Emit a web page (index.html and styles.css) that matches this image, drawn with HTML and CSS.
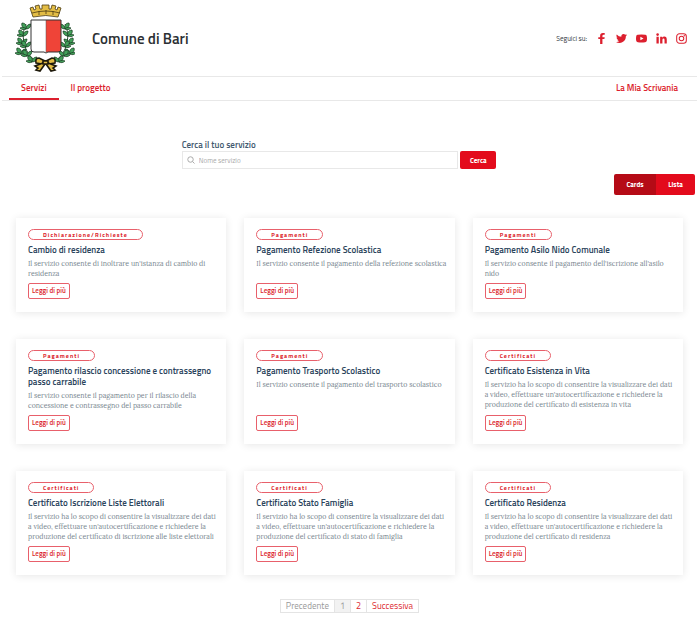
FILE: index.html
```html
<!DOCTYPE html>
<html lang="it">
  <head>
    <meta charset="UTF-8" />
    <meta name="viewport" content="width=device-width, initial-scale=1.0" />
    <title>Comune di Bari - Servizi</title>
    <link rel="stylesheet" href="styles.css">
  </head>
  <body>
    <!-- Header -->
    <header class="header">
      <a href="#" class="brand">
        <svg class="brand-logo" viewBox="0 0 60 68" aria-hidden="true">
          <defs>
            <g id="leaf">
              <path d="M0 0C-3-1-5-3-4-6C-1-6 1-4 0 0Z" />
              <path d="M0 0C0-3 2-5 5-5C5-2 3 0 0 0Z" />
              <path d="M0 0C-2 1-4 1-6-1C-4-2-2-2 0 0Z" />
            </g>
            <g id="branch">
              <path d="M11 20C6 30 7 48 22 58" fill="none" stroke="#234b2b" />
              <g fill="#43a05a" stroke="#173a20" stroke-width=".7">
                <use href="#leaf" x="11" y="25" />
                <use href="#leaf" x="8" y="32" />
                <use href="#leaf" x="7" y="40" />
                <use href="#leaf" x="11" y="43" />
                <use href="#leaf" x="6" y="50" />
                <use href="#leaf" x="12" y="52" />
                <use href="#leaf" x="17" y="58" />
              </g>
            </g>
          </defs>
          <use href="#branch" />
          <use href="#branch" transform="translate(61 0) scale(-1 1)" />
          <!-- crown -->
          <g fill="#e3bd45" stroke="#4b3b12" stroke-width=".8">
            <path d="M18 13L15 4L18 3L19 6L21 5L20 2L24 1L25 5H27L27 1H34L34 5H36L37 1L41 2L40 5L42 6L43 3L46 4L43 13Q31 10 18 13Z" />
            <path d="M17 9Q31 5 45 9" fill="none" />
            <path d="M24 7V11M31 6V10M38 7V11" fill="none" />
          </g>
          <!-- shield -->
          <path d="M16 16H31V48H19Q16 48 16 45Z" fill="#fff" />
          <path d="M31 16H46V45Q46 48 43 48H31Z" fill="#ef4438" />
          <path d="M31 16V48" stroke="#555" stroke-width=".5" />
          <path d="M16 16H46V45Q46 48 43 48H33L31 49L29 48H19Q16 48 16 45Z" fill="none" stroke="#333" />
          <!-- ribbon -->
          <g stroke="#1f1a0c" stroke-width="1.600" fill="#e3bd45">
            <path d="M30 57L24 54Q20 54 21 59L27 60Z" />
            <path d="M31 57L37 54Q41 54 40 59L34 60Z" />
            <path d="M28 59L20 62L23 64L21 66L25 67L30 60Z" />
            <path d="M33 59L41 62L38 64L40 66L36 67L31 60Z" />
            <path d="M28 57H33V60H28Z" />
          </g>
        </svg>
        <span class="brand-name">Comune di Bari</span>
      </a>
      <div class="social">
        <span class="social-label">Seguici su:</span>
        <a href="#" aria-label="Facebook">
          <svg viewBox="0 0 24 24"><path d="M9 24V13H5V9H9V6Q9 0 15 0H19V4H16.500Q14 4 14 6.500V9H19L18.300 13H14V24Z" /></svg>
        </a>
        <a href="#" aria-label="Twitter">
          <svg viewBox="0 0 24 24"><path d="M24 4.600a10 10 0 0 1-2.800.8 5 5 0 0 0 2.100-2.700 10 10 0 0 1-3.100 1.200 4.900 4.900 0 0 0-8.400 4.500A14 14 0 0 1 1.700 3.200a4.900 4.900 0 0 0 1.500 6.500 4.900 4.900 0 0 1-2.200-.6 4.900 4.900 0 0 0 3.900 4.900 5 5 0 0 1-2.200.1 4.900 4.900 0 0 0 4.600 3.400A9.900 9.900 0 0 1 0 19.500 14 14 0 0 0 21.500 7.100 10 10 0 0 0 24 4.600Z" /></svg>
        </a>
        <a href="#" aria-label="YouTube">
          <svg viewBox="0 0 24 24"><path fill-rule="evenodd" d="M4 4Q12 3 20 4Q23 4 23.500 7Q24.500 12 23.500 17Q23 20 20 20Q12 21 4 20Q1 20 .5 17Q-.5 12 .5 7Q1 4 4 4ZM9.500 8V16L16.500 12Z" /></svg>
        </a>
        <a href="#" aria-label="LinkedIn">
          <svg viewBox="0 0 24 24"><path d="M1 8H6V23H1ZM9 8H13.700V10.200Q15 7.600 18.300 7.600Q23.500 7.600 23.500 14V23H18.600V15Q18.600 11.800 16.400 11.800Q14 11.800 14 15V23H9Z" /><circle cx="3.500" cy="3.500" r="2.800" /></svg>
        </a>
        <a href="#" aria-label="Instagram">
          <svg viewBox="0 0 24 24"><g fill="none" stroke="currentColor" stroke-width="2.200"><rect x="1.500" y="1.500" width="21" height="21" rx="6" /><circle cx="12" cy="12" r="5" /></g><circle cx="18" cy="6" r="1.500" /></svg>
        </a>
      </div>
    </header>

    <!-- Navigation -->
    <nav class="navbar">
      <a href="#" class="nav-link active">Servizi</a>
      <a href="#" class="nav-link">Il progetto</a>
      <a href="#" class="nav-link nav-right">La Mia Scrivania</a>
    </nav>

    <main>
      <!-- Search -->
      <form class="search">
        <label for="service-name">Cerca il tuo servizio</label>
        <div class="search-row">
          <div class="search-box">
            <svg viewBox="0 0 16 16" aria-hidden="true"><circle cx="7" cy="7" r="5.500" /><path d="M11 11L15 15" /></svg>
            <input type="text" id="service-name" name="service" placeholder="Nome servizio" />
          </div>
          <button type="submit" class="search-button">Cerca</button>
        </div>
      </form>

      <div class="view-toggle">
        <button type="button" class="view-button selected">Cards</button>
        <button type="button" class="view-button">Lista</button>
      </div>

      <!-- Services -->
      <section class="cards">
        <article class="card">
          <span class="tag">Dichiarazione/Richieste</span>
          <h2>Cambio di residenza</h2>
          <p>Il servizio consente di inoltrare un'istanza di cambio di residenza</p>
          <a href="#" class="more">Leggi di più</a>
        </article>
        <article class="card">
          <span class="tag">Pagamenti</span>
          <h2>Pagamento Refezione Scolastica</h2>
          <p>Il servizio consente il pagamento della refezione scolastica</p>
          <a href="#" class="more">Leggi di più</a>
        </article>
        <article class="card">
          <span class="tag">Pagamenti</span>
          <h2>Pagamento Asilo Nido Comunale</h2>
          <p>Il servizio consente il pagamento dell'iscrizione all'asilo nido</p>
          <a href="#" class="more">Leggi di più</a>
        </article>
        <article class="card">
          <span class="tag">Pagamenti</span>
          <h2>Pagamento rilascio concessione e contrassegno passo carrabile</h2>
          <p>Il servizio consente il pagamento per il rilascio della concessione e contrassegno del passo carrabile</p>
          <a href="#" class="more">Leggi di più</a>
        </article>
        <article class="card">
          <span class="tag">Pagamenti</span>
          <h2>Pagamento Trasporto Scolastico</h2>
          <p>Il servizio consente il pagamento del trasporto scolastico</p>
          <a href="#" class="more">Leggi di più</a>
        </article>
        <article class="card">
          <span class="tag">Certificati</span>
          <h2>Certificato Esistenza in Vita</h2>
          <p>Il servizio ha lo scopo di consentire la visualizzare dei dati a video, effettuare un'autocertificazione e richiedere la produzione del certificato di esistenza in vita</p>
          <a href="#" class="more">Leggi di più</a>
        </article>
        <article class="card">
          <span class="tag">Certificati</span>
          <h2>Certificato Iscrizione Liste Elettorali</h2>
          <p>Il servizio ha lo scopo di consentire la visualizzare dei dati a video, effettuare un'autocertificazione e richiedere la produzione del certificato di iscrizione alle liste elettorali</p>
          <a href="#" class="more">Leggi di più</a>
        </article>
        <article class="card">
          <span class="tag">Certificati</span>
          <h2>Certificato Stato Famiglia</h2>
          <p>Il servizio ha lo scopo di consentire la visualizzare dei dati a video, effettuare un'autocertificazione e richiedere la produzione del certificato di stato di famiglia</p>
          <a href="#" class="more">Leggi di più</a>
        </article>
        <article class="card">
          <span class="tag">Certificati</span>
          <h2>Certificato Residenza</h2>
          <p>Il servizio ha lo scopo di consentire la visualizzare dei dati a video, effettuare un'autocertificazione e richiedere la produzione del certificato di residenza</p>
          <a href="#" class="more">Leggi di più</a>
        </article>
      </section>

      <!-- Pagination -->
      <nav class="pagination" aria-label="Pagine">
        <span class="page">Precedente</span>
        <span class="page current">1</span>
        <a href="#" class="page">2</a>
        <a href="#" class="page">Successiva</a>
      </nav>
    </main>
  </body>
</html>
```
FILE: styles.css
```css
/* Global Styles */
* {
  box-sizing: border-box;
}

body {
  margin: 0;
  background: white;
  color: #30373d;
  font-family: "Titillium Web", Roboto, sans-serif;
  font-size: 8px;
}

a {
  color: #dc1f2e;
  text-decoration: none;
}

button,
input {
  font-family: inherit;
}

/* Header */
.header {
  display: flex;
  justify-content: space-between;
  align-items: center;
  height: 76px;
  padding: 0 12px 0 15px;
}

.brand {
  display: flex;
  align-items: center;
  gap: 17px;
  color: #2b2f33;
}

.brand-logo {
  width: 60px;
  height: 68px;
}

.brand-name {
  font-size: 15px;
  font-weight: 600;
}

.social {
  display: flex;
  align-items: center;
  gap: 9px;
}

.social-label {
  font-size: 7px;
}

.social a {
  display: flex;
}

.social svg {
  width: 11px;
  height: 11px;
  fill: currentColor;
}

/* Navigation */
.navbar {
  display: flex;
  height: 25px;
  margin: 0 2px;
  padding: 0 7px;
  border-top: 1px solid #e8e8e8;
  border-bottom: 1px solid #e8e8e8;
}

.nav-link {
  padding: 0 12px;
  font-size: 9px;
  font-weight: 600;
  line-height: 22px;
}

.nav-link.active {
  border-bottom: 2px solid #dc1f2e;
}

.nav-right {
  margin-left: auto;
}

/* Search */
.search {
  width: 45%;
  margin: 37px 0 0 26%;
}

.search label {
  display: block;
  color: #435a70;
  font-size: 9px;
  font-weight: 600;
  line-height: 13px;
}

.search-row {
  display: flex;
  gap: 2px;
}

.search-box {
  display: flex;
  flex: 1;
  align-items: center;
  gap: 4px;
  height: 18px;
  padding: 0 4px;
  border: 1px solid #e8e8e8;
}

.search-box svg {
  width: 8px;
  height: 8px;
  fill: none;
  stroke: #aaa;
  stroke-width: 2;
}

.search-box input {
  flex: 1;
  min-width: 0;
  padding: 0;
  border: none;
  outline: none;
  font-size: 7px;
}

.search-box input::placeholder {
  color: #aaa;
}

.search-button {
  width: 36px;
  padding: 0;
  border: none;
  border-radius: 2px;
  background: #e30b1c;
  color: white;
  font-size: 7px;
  font-weight: bold;
}

/* Cards / list switch */
.view-toggle {
  display: flex;
  justify-content: flex-end;
  margin-top: 5px;
  padding-right: 4px;
}

.view-button {
  width: 39px;
  height: 21px;
  padding: 0;
  border: none;
  border-radius: 0 2px 2px 0;
  background: #e30b1c;
  color: white;
  font-size: 7px;
  font-weight: bold;
}

.view-button.selected {
  width: 42px;
  border-radius: 2px 0 0 2px;
  background: #b50b16;
}

/* Services */
.cards {
  display: grid;
  grid-template-columns: repeat(3, 1fr);
  gap: 27px 18px;
  margin-top: 23px;
  padding: 0 16px;
}

.card {
  display: flex;
  flex-direction: column;
  align-items: flex-start;
  gap: 4px;
  padding: 11px 6px 13px 12px;
  background: white;
  box-shadow: 0 1px 8px rgba(0, 0, 0, 0.1);
}

.tag {
  padding: 0 14px;
  border: 1px solid #e8606b;
  border-radius: 6px;
  color: #dc1f2e;
  font-size: 6px;
  font-weight: bold;
  line-height: 9px;
  letter-spacing: 1px;
}

.card h2 {
  margin: 0;
  color: #2b445c;
  font-size: 9px;
  font-weight: 600;
  line-height: 11px;
}

.card p {
  margin: 0;
  color: #78868f;
  font-family: Lora, "Liberation Serif", serif;
  font-size: 7px;
  line-height: 10px;
}

/* keeps the buttons of a row aligned under short descriptions */
.more {
  margin-top: auto;
  padding: 0 3px;
  border: 1px solid #e8606b;
  border-radius: 2px;
  font-size: 7px;
  font-weight: 600;
  line-height: 14px;
}

/* Pagination */
.pagination {
  display: flex;
  justify-content: center;
  margin: 24px 0 16px;
}

.page {
  padding: 0 5px;
  border: 1px solid #e4e4e4;
  border-left: none;
  font-size: 9px;
  line-height: 12px;
}

.page:first-child {
  border-left: 1px solid #e4e4e4;
}

span.page {
  color: #999;
}

.page.current {
  background: #f2f2f2;
}
```
